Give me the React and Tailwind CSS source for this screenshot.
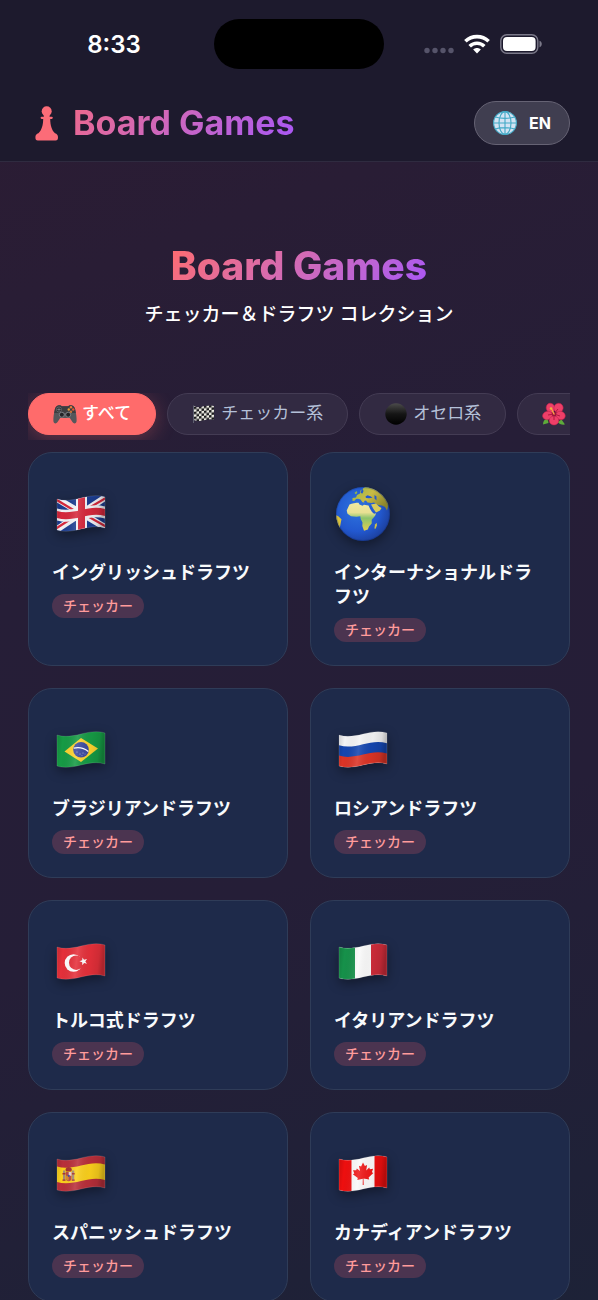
import React, { useState } from 'react';
import clsx from 'clsx';

// Wavy horizontal band, used for the flag outline and its stripes
const band = (y, h) =>
  `M5 ${y}c8 2.5 16 1 24-1s16-3.5 24-1v${h}c-8-2.5-16-1-24 1s-16 3.5-24 1z`;

function Flag({ id, children }) {
  return (
    <svg viewBox="0 0 58 58" className="size-[58px] drop-shadow-[0_4px_6px_rgba(0,0,0,0.4)]" aria-hidden="true">
      <defs>
        <clipPath id={`clip-${id}`}>
          <path d={band(14, 31)} />
        </clipPath>
        <linearGradient id={`shade-${id}`} x1="0" y1="0" x2="1" y2="0.1">
          <stop offset="0" stopColor="#000" stopOpacity="0.16" />
          <stop offset="0.15" stopColor="#000" stopOpacity="0" />
          <stop offset="0.45" stopColor="#fff" stopOpacity="0.12" />
          <stop offset="0.72" stopColor="#000" stopOpacity="0.03" />
          <stop offset="0.9" stopColor="#000" stopOpacity="0.1" />
          <stop offset="1" stopColor="#000" stopOpacity="0.25" />
        </linearGradient>
      </defs>
      <g clipPath={`url(#clip-${id})`}>
        {children}
        <rect x="5" y="8" width="48" height="42" fill={`url(#shade-${id})`} />
      </g>
      <path d={band(14, 31)} fill="none" stroke="#fff" strokeOpacity="0.16" strokeWidth="0.8" />
    </svg>
  );
}

function UkFlag() {
  return (
    <Flag id="gb">
      <rect x="5" y="8" width="48" height="42" fill="#1b3c8f" />
      <path d="M4 13 54 43M4 45 54 12" stroke="#f3f3f6" strokeWidth="6.5" />
      <path d="M4 14.5 28 29M30 28 54 41.5M4 43.500 28 28M30 27 54 13" stroke="#d6283c" strokeWidth="2.2" />
      <path d={band(23.5, 12)} fill="#f3f3f6" />
      <path d="M24 8h11v42H24z" fill="#f3f3f6" />
      <path d={band(26, 7)} fill="#d6283c" />
      <path d="M26 8h7v42h-7z" fill="#d6283c" />
    </Flag>
  );
}

function BrazilFlag() {
  return (
    <Flag id="br">
      <rect x="5" y="8" width="48" height="42" fill="#169b45" />
      <path d="M12.500 30.500 29 17l17 10.500-17 13.500z" fill="#fdd32f" />
      <circle cx="29" cy="28.700" r="7.800" fill="#3c4aa0" />
      <path d="M21.700 27.200c5-1.200 10-.5 14.600 3.400" fill="none" stroke="#fff" strokeWidth="1.300" />
      <g fill="#c9d0f2">
        <circle cx="25" cy="31" r="0.500" />
        <circle cx="28" cy="33" r="0.500" />
        <circle cx="31" cy="32" r="0.500" />
        <circle cx="30" cy="34.500" r="0.400" />
        <circle cx="33" cy="33" r="0.400" />
      </g>
    </Flag>
  );
}

function RussiaFlag() {
  return (
    <Flag id="ru">
      <rect x="5" y="8" width="48" height="42" fill="#f4f4f5" />
      <path d={band(24.3, 12)} fill="#1546b0" />
      <path d={band(34.600, 14)} fill="#dc3426" />
    </Flag>
  );
}

function TurkeyFlag() {
  return (
    <Flag id="tr">
      <rect x="5" y="8" width="48" height="42" fill="#e5303a" />
      <circle cx="21.500" cy="30" r="8.800" fill="#fff" />
      <circle cx="24.200" cy="29.700" r="7.200" fill="#e5303a" />
      <path d="m30.500 24.500 1.500 2.200 3-.8-1.700 2.500 1.700 2.300-2.900-.7-1.800 2.200-.1-2.900-2.800-1 2.800-1z" fill="#fff" />
    </Flag>
  );
}

function ItalyFlag() {
  return (
    <Flag id="it">
      <rect x="5" y="8" width="48" height="42" fill="#fafafa" />
      <rect x="5" y="8" width="16" height="42" fill="#16914a" />
      <rect x="37" y="8" width="16" height="42" fill="#cf2c3a" />
    </Flag>
  );
}

function SpainFlag() {
  return (
    <Flag id="es">
      <rect x="5" y="8" width="48" height="42" fill="#b92f3a" />
      <path d={band(21.500, 15.500)} fill="#fbd01c" />
      <path d="M11 25.500h2.200v10H11zM20 25.500h2.200v10H20z" fill="#a78a76" />
      <path d="M10.500 28h3v1.500h-3zM19.700 28h3v1.500h-3zM10.500 34.500h3v1.200h-3zM19.700 34.500h3v1.200h-3z" fill="#a8322f" />
      <path d="M13.500 25c0-2 1.500-3 3.200-3s3.200 1 3.200 3l-.8 1.500h-4.800z" fill="#a8322f" />
      <path d="M13.800 27h5.700v6.500c0 3.500-5.700 3.500-5.700 0z" fill="#b8474a" />
      <path d="M16.700 27h2.800v3.800h-2.800z" fill="#e8d7d0" />
      <path d="M13.800 30.800h2.900v4.600c-1.800 0-2.900-.9-2.900-2z" fill="#d98b2c" />
      <circle cx="16.700" cy="30.800" r="1.100" fill="#3c4aa0" />
    </Flag>
  );
}

function CanadaFlag() {
  return (
    <Flag id="ca">
      <rect x="5" y="8" width="48" height="42" fill="#fafafa" />
      <rect x="5" y="8" width="12.500" height="42" fill="#ee0f0f" />
      <rect x="40.500" y="8" width="12.500" height="42" fill="#ee0f0f" />
      <path
        d="m29 17.500 1.900 3.500 2.200-1-.9 5.400 3-2.800.7 1.700 3.200-.5-1.200 3.500 1.500.8-4.800 4.400.6 1.900-5.700-.8.2 6.300h-1l.1-6.200-5.500 1.300.5-2-5-3.700 1.500-.9-1.300-3.200 3.200.1.600-1.700 3.300 2.300-1.200-5.100 2.200.7z"
        fill="#f01818"
      />
    </Flag>
  );
}

function EarthIcon() {
  return (
    <svg viewBox="0 0 58 58" className="size-[58px] drop-shadow-[0_4px_6px_rgba(0,0,0,0.4)]" aria-hidden="true">
      <defs>
        <radialGradient id="sea" cx="0.4" cy="0.4" r="0.65">
          <stop offset="0" stopColor="#2f74de" />
          <stop offset="0.65" stopColor="#2258cf" />
          <stop offset="1" stopColor="#1c3f9c" />
        </radialGradient>
        <linearGradient id="africa" x1="0" y1="0" x2="0" y2="1">
          <stop offset="0" stopColor="#f2e9a0" />
          <stop offset="0.35" stopColor="#e9e093" />
          <stop offset="0.55" stopColor="#8cc46c" />
          <stop offset="1" stopColor="#e3cf4e" />
        </linearGradient>
        <linearGradient id="eurasia" x1="0" y1="0" x2="1" y2="0.6">
          <stop offset="0" stopColor="#8fb64e" />
          <stop offset="0.5" stopColor="#c9bb45" />
          <stop offset="1" stopColor="#8a842c" />
        </linearGradient>
        <clipPath id="earth-clip">
          <circle cx="29" cy="29" r="27" />
        </clipPath>
      </defs>
      <circle cx="29" cy="29" r="27" fill="url(#sea)" />
      <g clipPath="url(#earth-clip)">
        {/* Europe and Asia */}
        <path
          d="M18.500 16v-3l3.500-.5 1-2.500 3-1.500.5-3L31 2h8l9 5 7 10-2 8.500-2-3.500-3-1.500-4-.5-4-2.500-2.500.5-4-.5-1.500-2-2 .5.500 1.500-2-.3-2-2.700-2.500-.8-2 .3-1.500 1.700z"
          fill="url(#eurasia)"
        />
        <path d="M31.500 11.500l2-1.300 3 1 2 1.500-3.500.6-3-.3zM40.500 10l2 1.500v4l-2-2z" fill="#2258cf" />
        <path d="M28 3l1.500 3-1 2.500-1.800-.5z" fill="#2258cf" />
        <path d="m37 19.500 5-1 3 3 2.500 1.500-1.500 2.500-4 2-2.500-3.500z" fill="#d8cb5a" />
        <path
          d="M15.500 19.500C18 18.300 22 17.700 24.500 17.700L25.500 19.500 28.500 20.800 30 19.800 34.500 20.500 36 23.700 38 27 40 28.800 42 28.300C41.500 31 39.500 33 37.700 34.800V38.500L35 41.500 33.800 44.500 30 45.700 28.300 41 28.500 37.500 26.700 34 26.300 31.300 22.500 31.700 17 31.200 13.500 28.800 12.700 25.500z"
          fill="url(#africa)"
        />
        <path d="m36.200 21.500 2.300 4 1.800 2.700" fill="none" stroke="#2258cf" strokeWidth="0.900" />
        <path d="m41 39.500 1.700-1.800.2 2.800-1.300 3.300-1.200-.4z" fill="#cfc04a" />
        <path d="M1 30l3 1 3.500 3.300-.8 4-1.200 6L1 42z" fill="#d9c13c" />
        <path d="M20.500 8l2-2 .8 1.500-1.300 2z" fill="#8fb64e" />
      </g>
      <circle cx="29" cy="29" r="26.500" fill="none" stroke="#0c1f5c" strokeOpacity="0.25" />
    </svg>
  );
}

function PawnIcon() {
  return (
    <svg viewBox="0 0 36 36" className="size-9" fill="#fc6c78" aria-hidden="true">
      <circle cx="18.700" cy="6.300" r="5" />
      <path d="M15.500 9.500h6.400l-.4 2.300h2.200c1.500 0 1.500 2.200 0 2.200h-1.500c.1 6.200 1.500 11.300 4.800 14.300 1.900.6 3 1.800 3 3.900 0 2.200-.7 3.300-2.400 3.300H9.800c-1.700 0-2.400-1.100-2.400-3.300 0-2.100 1.100-3.300 3-3.900 3.300-3 4.700-8.100 4.800-14.300h-1.500c-1.500 0-1.500-2.200 0-2.200h2.200z" />
    </svg>
  );
}

function WebIcon() {
  return (
    <svg viewBox="0 0 24 24" className="size-6" fill="none" aria-hidden="true">
      <circle cx="12" cy="12" r="11.500" fill="#d3e3f3" />
      <g stroke="#42a9c6" strokeWidth="1.100">
        <circle cx="12" cy="12" r="11.400" />
        <ellipse cx="12" cy="12" rx="6" ry="11.400" />
        <path d="M12 .6v22.800M.6 12h22.800M2.300 6c5 1.800 14.400 1.800 19.400 0M2.300 18c5-1.800 14.400-1.800 19.400 0" />
      </g>
    </svg>
  );
}

function GamepadIcon() {
  return (
    <svg viewBox="0 0 24 24" className="size-6" aria-hidden="true">
      <path d="M5 3.500c1.500-.6 3-.4 3.800.7h6.400c.8-1.100 2.300-1.300 3.800-.7 1.800.6 2.700 2 3.200 4 .9 3.800 1.600 8.500 1.400 11.500-.1 2.600-2.700 3.200-4 1.300L16.800 16H7.200l-2.800 4.300c-1.300 1.900-3.900 1.300-4-1.300C.2 16 .9 11.300 1.800 7.500c.5-2 1.400-3.400 3.200-4z" fill="#55575b" />
      <path d="M5 3.500c1.500-.6 3-.4 3.800.7h6.400c.8-1.100 2.300-1.300 3.800-.7 1.800.6 2.700 2 3.200 4l.6 3.500H1.200l.6-3.500c.5-2 1.400-3.400 3.200-4z" fill="#3c3d40" />
      <circle cx="6" cy="7.500" r="2.500" fill="#232427" stroke="#74777b" strokeWidth="0.700" />
      <path d="M6 5.800v3.400M4.300 7.500h3.400" stroke="#85888c" strokeWidth="0.800" />
      <circle cx="8.800" cy="12.700" r="2.500" fill="#232427" stroke="#8c9095" strokeWidth="0.800" />
      <circle cx="15.200" cy="12.700" r="2.500" fill="#232427" stroke="#8c9095" strokeWidth="0.800" />
      <circle cx="18" cy="5.300" r="1.200" fill="#f0793a" />
      <circle cx="20.200" cy="7.500" r="1.200" fill="#e8542f" />
      <circle cx="15.800" cy="7.500" r="1.200" fill="#e89b3a" />
      <circle cx="18" cy="9.700" r="1.200" fill="#c9703a" />
    </svg>
  );
}

function CheckeredFlagIcon() {
  return (
    <svg viewBox="0 0 24 24" className="size-6" aria-hidden="true">
      <defs>
        <pattern id="checks" width="5" height="5" patternUnits="userSpaceOnUse" patternTransform="skewY(-6) translate(2 5)">
          <path d="M0 0h5v5H0z" fill="#ecebe2" />
          <path d="M0 0h2.500v2.500H0zM2.500 2.500H5V5H2.500z" fill="#1c1c1e" />
        </pattern>
      </defs>
      <path d="M1.500 3.500v17.500" stroke="#5e6070" strokeWidth="1" />
      <path d="M2 4c4 2.300 6.500 1 10 .3s7-1.500 10-.2V18c-3-1.300-6.500-.7-10 .2S6 19.500 2 18z" fill="url(#checks)" />
    </svg>
  );
}

function BlackCircleIcon() {
  return (
    <svg viewBox="0 0 24 24" className="size-6" aria-hidden="true">
      <defs>
        <linearGradient id="disc" x1="0" y1="0" x2="0" y2="1">
          <stop offset="0" stopColor="#4b4b4b" />
          <stop offset="0.5" stopColor="#151515" />
          <stop offset="1" stopColor="#000" />
        </linearGradient>
      </defs>
      <circle cx="12" cy="12" r="10.700" fill="url(#disc)" />
    </svg>
  );
}

function HibiscusIcon() {
  return (
    <svg viewBox="0 0 24 24" className="size-6" aria-hidden="true">
      <path d="M1 22.500c0-3 1.500-5.500 4.500-6l1 4.500zM23 22.500c-3 .5-6-.5-7.500-2.500l4-2.500z" fill="#5dab3a" />
      <g fill="#ee3f68" stroke="#c4214b" strokeWidth="0.500">
        <ellipse cx="8.500" cy="6" rx="4.300" ry="4.800" transform="rotate(-15 8.500 6)" />
        <ellipse cx="16.500" cy="6" rx="4.600" ry="4.800" transform="rotate(30 16.500 6)" />
        <ellipse cx="5.500" cy="13.500" rx="5" ry="4.200" transform="rotate(-15 5.500 13.500)" />
        <ellipse cx="18.500" cy="13.500" rx="4.800" ry="4.200" transform="rotate(20 18.500 13.500)" />
        <ellipse cx="12" cy="18.500" rx="4.800" ry="4.500" />
      </g>
      <path d="m12 12-3-5m3 5 4-5m-4 5-6 1m6-1 6 2m-6-2v6" stroke="#b0163f" strokeWidth="1" />
      <circle cx="12" cy="12" r="2" fill="#a3143a" />
      <path d="M12 12 9.500 7" stroke="#f7a14a" strokeWidth="1.500" strokeLinecap="round" />
      <circle cx="9" cy="6.500" r="1.300" fill="#f4b23c" />
    </svg>
  );
}

const categories = [
  { id: 'all', label: 'すべて', Icon: GamepadIcon },
  { id: 'checkers', label: 'チェッカー系', Icon: CheckeredFlagIcon },
  { id: 'othello', label: 'オセロ系', Icon: BlackCircleIcon },
  { id: 'hana', label: '', Icon: HibiscusIcon },
];

const games = [
  { id: 'english', name: 'イングリッシュドラフツ', Icon: UkFlag },
  { id: 'international', name: 'インターナショナルドラフツ', Icon: EarthIcon },
  { id: 'brazilian', name: 'ブラジリアンドラフツ', Icon: BrazilFlag },
  { id: 'russian', name: 'ロシアンドラフツ', Icon: RussiaFlag },
  { id: 'turkish', name: 'トルコ式ドラフツ', Icon: TurkeyFlag },
  { id: 'italian', name: 'イタリアンドラフツ', Icon: ItalyFlag },
  { id: 'spanish', name: 'スパニッシュドラフツ', Icon: SpainFlag },
  { id: 'canadian', name: 'カナディアンドラフツ', Icon: CanadaFlag },
];

function StatusBar() {
  return (
    <div className="grid h-[88px] grid-cols-[1fr_170px_1fr] items-center">
      <span className="pt-px pl-3.5 text-center text-2xl font-semibold text-white">8:33</span>
      <div className="h-[50px] rounded-full bg-black" />
      <div className="flex items-center justify-center gap-2.5 pr-4">
        <svg viewBox="0 0 30 20" className="h-5 w-[30px]" fill="#56546a" aria-hidden="true">
          <circle cx="3" cy="16.500" r="2.700" />
          <circle cx="11" cy="16.500" r="2.700" />
          <circle cx="19" cy="16.500" r="2.700" />
          <circle cx="27" cy="16.500" r="2.700" />
        </svg>
        <svg viewBox="0 0 26 20" className="h-5 w-[26px]" fill="none" stroke="#fff" strokeWidth="3.600" aria-hidden="true">
          <path d="M1.400 7.300c6.500-6.300 16.700-6.300 23.200 0" />
          <path d="M5.700 12.200c4.100-4 10.500-4 14.600 0" />
          <path d="M13 19.500 9.200 15.600c2.200-2 5.400-2 7.600 0z" fill="#fff" stroke="none" />
        </svg>
        <svg viewBox="0 0 42 20" className="h-5 w-[42px]" aria-hidden="true">
          <rect x="0.800" y="0.800" width="37" height="18.400" rx="6" fill="none" stroke="#7b7989" strokeWidth="1.400" />
          <rect x="3" y="3" width="32.600" height="14" rx="4" fill="#fff" />
          <path d="M39.500 6.800c3 .6 3 5.800 0 6.400z" fill="#7b7989" />
        </svg>
      </div>
    </div>
  );
}

function GameCard({ game }) {
  const { Icon, name, id } = game;
  return (
    <a
      href={`#${id}`}
      className="flex flex-col items-start rounded-3xl border border-[#2f3c58] bg-[#1e2a4a] p-[23px]"
    >
      <div className="mb-[9px] flex h-[76px] items-center">
        <Icon />
      </div>
      <h2 className="text-lg leading-6 font-semibold text-slate-50">{name}</h2>
      <span className="mt-[9px] rounded-full bg-[#4b3450] px-[11px] text-sm leading-6 font-medium text-[#ff9b9b]">
        チェッカー
      </span>
    </a>
  );
}

export default function App() {
  const [active, setActive] = useState('all');

  return (
    <div className="flex h-screen flex-col overflow-hidden bg-[linear-gradient(160deg,#2c1c33_0%,#291d35_20%,#261e37_40%,#251e37_65%,#1d2237_100%)] font-['Inter','Noto_Sans_CJK_JP',sans-serif]">
      <header className="shrink-0 border-b border-[#2f2b40] bg-[#1d1a2d]">
        <StatusBar />
        <div className="flex h-[73px] items-center justify-between px-7 pb-1">
          <div className="flex items-center gap-[9px]">
            <PawnIcon />
            <span className="bg-linear-135 from-[#ee688a] to-[#a855f7] bg-clip-text text-[34px] leading-10 font-bold text-transparent">
              Board Games
            </span>
          </div>
          <button
            type="button"
            className="flex h-11 cursor-pointer items-center gap-3 rounded-full border border-[#666374] bg-[#403e50] px-[18px] text-base font-bold text-white"
          >
            <WebIcon />
            EN
          </button>
        </div>
      </header>

      <main className="min-h-0 flex-1 overflow-y-auto px-7 pb-7 [scrollbar-width:none]">
        <section className="flex flex-col items-center pt-20 pb-16">
          <h1 className="bg-linear-135 from-[#ff6b6b] to-[#a855f7] bg-clip-text text-[39px] leading-12 font-extrabold text-transparent">
            Board Games
          </h1>
          <p className="mt-[11px] text-[19px] leading-7 font-medium text-white">チェッカー＆ドラフツ コレクション</p>
        </section>

        {/* Category filter */}
        <div className="mb-3 flex gap-[11px] overflow-x-auto pb-[5px] [scrollbar-width:none]">
          {categories.map(({ id, label, Icon }) => (
            <button
              key={id}
              type="button"
              aria-label={label || id}
              onClick={() => setActive(id)}
              className={clsx(
                'flex h-[42px] shrink-0 cursor-pointer items-center gap-[5px] rounded-full border px-6 text-[17px] whitespace-nowrap',
                active === id
                  ? 'border-[#ff6b6b] bg-[#ff6b6b] font-medium text-white shadow-[0_4px_20px_rgba(255,107,107,0.3)]'
                  : 'border-[#443c54] bg-[#322a42] font-normal text-[#b4c0d8]'
              )}
            >
              <Icon />
              {label}
            </button>
          ))}
        </div>

        <div className="grid grid-cols-2 gap-[22px]">
          {games.map((game) => (
            <GameCard key={game.id} game={game} />
          ))}
        </div>
      </main>
    </div>
  );
}
